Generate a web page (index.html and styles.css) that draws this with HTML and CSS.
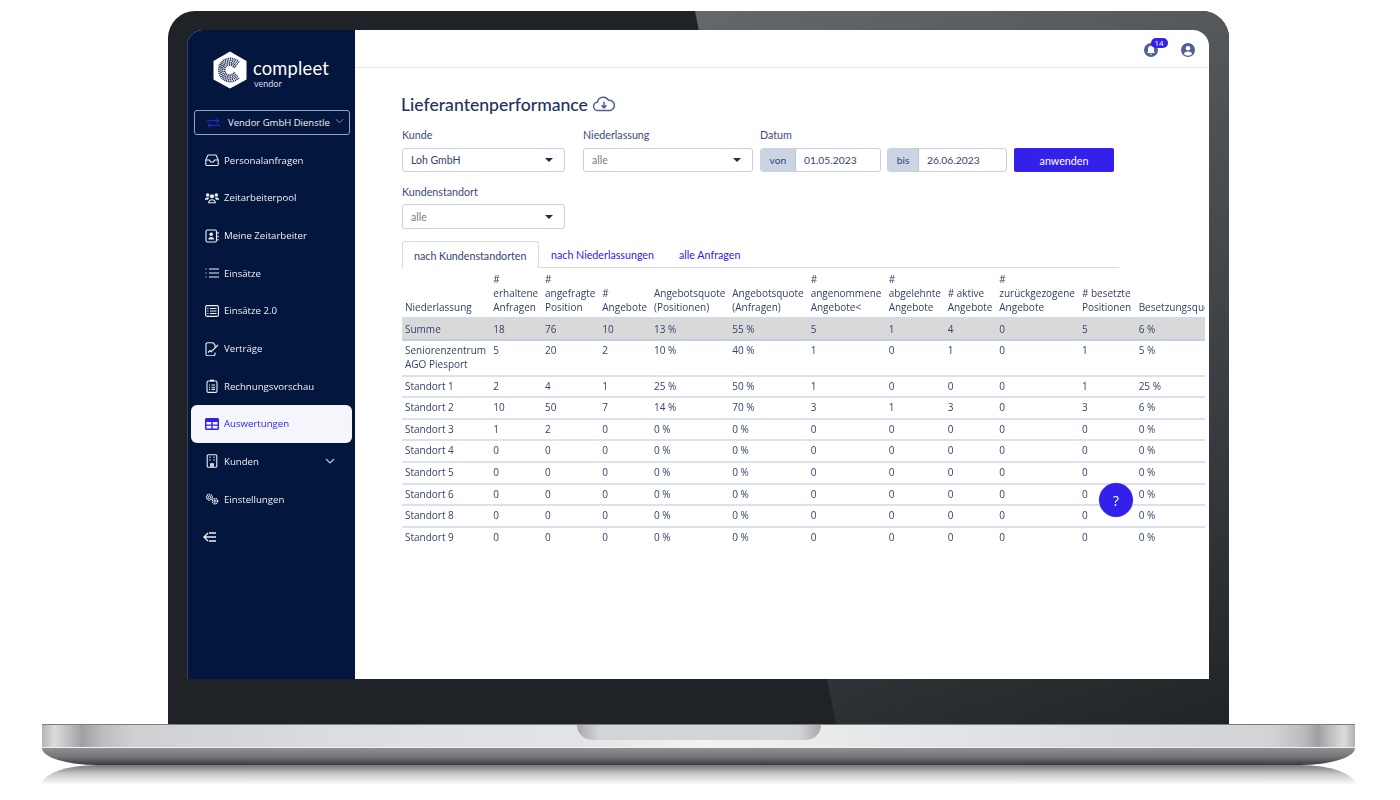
FILE: index.html
```html
<!DOCTYPE html>
<html lang="de">
<head>
<meta charset="utf-8">
<title>Lieferantenperformance</title>
<link rel="stylesheet" href="styles.css">
</head>
<body>
<div class="laptop">
  <div class="lid">
    <div class="glare"></div>
    <div class="screen">
      <aside class="sidebar">
        <div class="brand">
          <svg class="logo" viewBox="0 0 34 38">
            <path class="logo-hex" d="M17 0.500 33.500 10v18.500L17 37.500 0.500 28.500V10z"/>
            <g class="logo-c">
              <path d="M26 11.500A11.500 11.500 0 1 0 26 26.500"/>
              <path d="M24.500 13.500A9.300 9.300 0 1 0 24.500 24.500"/>
              <path d="M23 15.500A7.200 7.200 0 1 0 23 22.500"/>
              <path d="M21.500 17A5.200 5.200 0 1 0 21.500 21"/>
            </g>
          </svg>
          <div class="brand-text">
            <div class="brand-name">compleet</div>
            <div class="brand-sub">vendor</div>
          </div>
        </div>
        <div class="vendor">
          <svg class="vendor-arrows" viewBox="0 0 14 12"><path d="M0 3.500h13M10 1l3 2.500L10 6M14 8.500H1M4 6 1 8.500 4 11"/></svg>
          <span class="vendor-name">Vendor GmbH Dienstle</span>
          <svg class="vendor-chev" viewBox="0 0 10 6"><path d="M1 1l4 4 4-4"/></svg>
        </div>
        <nav class="nav">
          <a class="nav-item"><svg class="ico" viewBox="0 0 14 14"><path d="M3 2h8l2.300 5v4a1.500 1.500 0 0 1-1.500 1.500H2.200A1.500 1.500 0 0 1 .7 11V7zM.7 7h3.800l1 2h3l1-2h3.800"/></svg>Personalanfragen</a>
          <a class="nav-item"><svg class="ico ico-fill" viewBox="0 0 16 14"><circle cx="3" cy="3.500" r="2"/><circle cx="13" cy="3.500" r="2"/><circle cx="8" cy="5" r="2.400"/><path d="M0 8.500c0-1.500 1.200-2 3-2s2 .5 2 .5c-1 .5-1.500 1.200-1.500 2H0zM16 8.500c0-1.500-1.200-2-3-2s-2 .5-2 .5c1 .5 1.500 1.200 1.500 2H16zM3.500 13c0-3 2-4.500 4.500-4.500s4.500 1.500 4.500 4.500zM5 11.800h6c-.3-1.400-1.500-2.200-3-2.200s-2.700.8-3 2.200z"/></svg>Zeitarbeiterpool</a>
          <a class="nav-item"><svg class="ico" viewBox="0 0 14 14"><rect x="1" y="1" width="10.500" height="12" rx="1.500"/><circle class="solid" cx="6.200" cy="5.300" r="1.800"/><path class="solid" d="M3.300 10.500c0-1.800 1.300-2.600 2.900-2.600s2.900.8 2.900 2.600z"/><path d="M13 3v2M13 6.500v2M13 10v1.500"/></svg>Meine Zeitarbeiter</a>
          <a class="nav-item"><svg class="ico" viewBox="0 0 14 14"><path d="M4 3h10M4 7h10M4 11h10M.5 3h1M.5 7h1M.5 11h1"/></svg>Einsätze</a>
          <a class="nav-item"><svg class="ico" viewBox="0 0 14 14"><rect x=".6" y="1.600" width="12.800" height="10.800" rx="1.500"/><path d="M5 4.500h6.500M5 7h6.500M5 9.500h6.500M2.300 4.500h1.200M2.300 7h1.200M2.300 9.500h1.200"/></svg>Einsätze 2.0</a>
          <a class="nav-item"><svg class="ico" viewBox="0 0 14 14"><path d="M10 5V3L8 .8H2.500A1.500 1.500 0 0 0 1 2.300v9.900a1.500 1.500 0 0 0 1.500 1.500h6A1.500 1.500 0 0 0 10 12.200V10.500M3 10.500l2-2 1.200 1.200L13 3"/></svg>Verträge</a>
          <a class="nav-item"><svg class="ico" viewBox="0 0 14 14"><rect x="2" y="2" width="10" height="11.400" rx="1.300"/><path class="thick" d="M5 1.500h4"/><path d="M6.500 6h3.500M6.500 8.200h3.500M6.500 10.400h3.500M4 6h1M4 8.200h1M4 10.400h1"/></svg>Rechnungsvorschau</a>
          <a class="nav-item is-active"><svg class="ico ico-table" viewBox="0 0 14 12"><path d="M1.500 0h11A1.500 1.500 0 0 1 14 1.500v9a1.500 1.500 0 0 1-1.500 1.500h-11A1.500 1.500 0 0 1 0 10.500v-9A1.500 1.500 0 0 1 1.500 0zM1.500 4v2.500h4.800V4zM7.700 4v2.500h4.800V4zM1.500 7.800v2.700h4.800V7.800zM7.700 7.800v2.700h4.800V7.800z"/></svg>Auswertungen</a>
          <a class="nav-item"><svg class="ico" viewBox="0 0 14 14"><rect x="2.200" y=".8" width="9.600" height="12.400" rx="1"/><path class="thick" d="M4.500 3.300h1M8.500 3.300h1M4.500 6h1M8.500 6h1M6 13V10h2v3"/></svg>Kunden<svg class="nav-chev" viewBox="0 0 10 6"><path d="M1 1l4 4 4-4"/></svg></a>
          <a class="nav-item"><svg class="ico ico-gears" viewBox="0 0 16 14"><circle cx="5" cy="5" r="1.500"/><circle class="teeth" cx="5" cy="5" r="3.300"/><circle cx="11.500" cy="9.500" r="1.200"/><circle class="teeth" cx="11.500" cy="9.500" r="3"/></svg>Einstellungen</a>
          <a class="nav-item"><svg class="ico ico-back" viewBox="0 0 14 10"><path d="M5 1 1 5l4 4M1 5h12M6 1h7M6 9h7"/></svg></a>
        </nav>
      </aside>
      <main class="main">
        <header class="topbar">
          <div class="bell">
            <svg class="top-ico" viewBox="0 0 14 14"><circle class="top-bg" cx="7" cy="7" r="7"/><path class="top-fg" d="M7 3a3 3 0 0 0-3 3v2.500L3 10h8l-1-1.500V6a3 3 0 0 0-3-3zM6 10.800h2a1 1 0 0 1-2 0z"/></svg>
            <span class="badge">14</span>
          </div>
          <svg class="top-ico" viewBox="0 0 14 14"><circle class="top-bg" cx="7" cy="7" r="7"/><circle class="top-fg" cx="7" cy="5.300" r="2.300"/><path class="top-fg" d="M2.800 11c.6-1.600 2.300-2.400 4.200-2.400s3.600.8 4.200 2.400A5.500 5.500 0 0 1 7 12.800 5.500 5.500 0 0 1 2.800 11z"/></svg>
        </header>
        <section class="content">
          <h1 class="title">Lieferantenperformance
            <svg class="cloud" viewBox="0 0 24 17"><path d="M6 15.500H5.500a4.500 4.500 0 0 1-.6-9A6.500 6.500 0 0 1 17 4.500a5.500 5.500 0 0 1 1.500 11H6zM12 6v6.500M9.300 10l2.700 2.700 2.700-2.700"/></svg>
          </h1>
          <div class="filters">
            <div class="field f-kunde">
              <label class="label">Kunde</label>
              <div class="select"><span>Loh GmbH</span><i class="caret"></i></div>
            </div>
            <div class="field f-nl">
              <label class="label">Niederlassung</label>
              <div class="select is-muted"><span>alle</span><i class="caret"></i></div>
            </div>
            <div class="field f-date">
              <label class="label">Datum</label>
              <div class="date-row">
                <div class="date d-von"><span class="addon">von</span><span class="date-val">01.05.2023</span></div>
                <div class="date d-bis"><span class="addon">bis</span><span class="date-val">26.06.2023</span></div>
                <button class="apply">anwenden</button>
              </div>
            </div>
          </div>
          <div class="field f-kunde f-standort">
            <label class="label">Kundenstandort</label>
            <div class="select is-muted is-tall"><span>alle</span><i class="caret"></i></div>
          </div>
          <div class="tabs">
            <a class="tab is-current">nach Kundenstandorten</a>
            <a class="tab t2">nach Niederlassungen</a>
            <a class="tab t3">alle Anfragen</a>
          </div>
          <div class="table-clip">
            <table class="perf">
              <colgroup><col class="c1"><col class="c2"><col class="c3"><col class="c4"><col class="c5"><col class="c6"><col class="c7"><col class="c8"><col class="c9"><col class="c10"><col class="c11"><col class="c12"></colgroup>
              <thead>
                <tr><th>Niederlassung</th><th>#<br>erhaltene<br>Anfragen</th><th>#<br>angefragte<br>Position</th><th>#<br>Angebote</th><th>Angebotsquote<br>(Positionen)</th><th>Angebotsquote<br>(Anfragen)</th><th>#<br>angenommene<br>Angebote&lt;</th><th>#<br>abgelehnte<br>Angebote</th><th># aktive<br>Angebote</th><th>#<br>zurückgezogene<br>Angebote</th><th># besetzte<br>Positionen</th><th>Besetzungsquote</th></tr>
              </thead>
              <tbody>
                <tr class="sum"><td>Summe</td><td>18</td><td>76</td><td>10</td><td>13 %</td><td>55 %</td><td>5</td><td>1</td><td>4</td><td>0</td><td>5</td><td>6 %</td></tr>
                <tr class="two"><td>Seniorenzentrum<br>AGO Piesport</td><td>5</td><td>20</td><td>2</td><td>10 %</td><td>40 %</td><td>1</td><td>0</td><td>1</td><td>0</td><td>1</td><td>5 %</td></tr>
                <tr><td>Standort 1</td><td>2</td><td>4</td><td>1</td><td>25 %</td><td>50 %</td><td>1</td><td>0</td><td>0</td><td>0</td><td>1</td><td>25 %</td></tr>
                <tr><td>Standort 2</td><td>10</td><td>50</td><td>7</td><td>14 %</td><td>70 %</td><td>3</td><td>1</td><td>3</td><td>0</td><td>3</td><td>6 %</td></tr>
                <tr><td>Standort 3</td><td>1</td><td>2</td><td>0</td><td>0 %</td><td>0 %</td><td>0</td><td>0</td><td>0</td><td>0</td><td>0</td><td>0 %</td></tr>
                <tr><td>Standort 4</td><td>0</td><td>0</td><td>0</td><td>0 %</td><td>0 %</td><td>0</td><td>0</td><td>0</td><td>0</td><td>0</td><td>0 %</td></tr>
                <tr><td>Standort 5</td><td>0</td><td>0</td><td>0</td><td>0 %</td><td>0 %</td><td>0</td><td>0</td><td>0</td><td>0</td><td>0</td><td>0 %</td></tr>
                <tr><td>Standort 6</td><td>0</td><td>0</td><td>0</td><td>0 %</td><td>0 %</td><td>0</td><td>0</td><td>0</td><td>0</td><td>0</td><td>0 %</td></tr>
                <tr><td>Standort 8</td><td>0</td><td>0</td><td>0</td><td>0 %</td><td>0 %</td><td>0</td><td>0</td><td>0</td><td>0</td><td>0</td><td>0 %</td></tr>
                <tr class="last"><td>Standort 9</td><td>0</td><td>0</td><td>0</td><td>0 %</td><td>0 %</td><td>0</td><td>0</td><td>0</td><td>0</td><td>0</td><td>0 %</td></tr>
              </tbody>
            </table>
          </div>
        </section>
        <button class="help">?</button>
      </main>
    </div>
  </div>
  <div class="base"><div class="notch"></div></div>
  <div class="underside"></div>
  <div class="reflection"></div>
</div>
</body>
</html>
```

FILE: styles.css
```css
* { box-sizing: border-box; }
html, body { margin: 0; padding: 0; background: #fff; }
body { width: 1400px; height: 800px; overflow: hidden; font-family: "Open Sans", sans-serif; }

.laptop { display: flex; flex-direction: column; padding: 11px 45px 0 42px; }

.lid {
  position: relative;
  align-self: flex-start;
  margin-left: 126px;
  width: 1061px;
  height: 713px;
  padding: 19px 20px 45px 19px;
  background: #1f2226;
  border-radius: 27px 27px 0 0;
  overflow: hidden;
}
.glare {
  position: absolute;
  inset: 0;
  background: linear-gradient(160deg, #73777a 0%, #55595c 35%, #3a3e42 70%, #212427 100%);
  clip-path: polygon(527px 0, 100% 0, 100% 100%, 668px 100%);
}
.screen {
  position: relative;
  display: flex;
  height: 649px;
  background: #fff;
  border-radius: 16px 16px 0 0;
  overflow: hidden;
  filter: blur(.3px);
}

/* sidebar */
.sidebar {
  width: 168px;
  flex: none;
  background: #03163d;
  border-left: 1px solid #3b4150;
  display: flex;
  flex-direction: column;
}
.brand { display: flex; align-items: flex-start; gap: 6px; padding: 21px 0 0 25px; height: 80px; }
.logo { width: 34px; height: 38px; flex: none; }
.logo-hex { fill: #fff; }
.logo-c path { fill: none; stroke: #1d2c50; stroke-width: 1.800; stroke-dasharray: 1.100 .7; }
.brand-text { color: #fff; padding-top: 7px; }
.brand-name { font-family: Lato, sans-serif; font-size: 18.300px; line-height: 21px; letter-spacing: .2px; font-weight: 400; }
.brand-sub { font-family: Lato, sans-serif; font-size: 9px; line-height: 9px; color: #d5d9e2; margin-left: 1px; }

.vendor {
  margin-left: 6px;
  width: 156px;
  height: 25px;
  display: flex;
  align-items: center;
  border: 1px solid #9aa2b3;
  border-radius: 3px;
  color: #f0f2f6;
  font-size: 9.500px;
}
.vendor-arrows { width: 13px; height: 12px; margin-left: 12px; fill: none; stroke: #3a2bf0; stroke-width: 1; }
.vendor-name { margin-left: 8px; white-space: nowrap; }
.vendor-chev { width: 9px; height: 6px; margin-left: 5px; margin-top: -3px; fill: none; stroke: #9aa2b3; stroke-width: 1; }

.nav { display: flex; flex-direction: column; margin-top: 6.500px; padding: 0 3px; }
.nav-item {
  display: flex;
  align-items: center;
  height: 37.650px;
  padding-left: 14px;
  color: #eef0f5;
  font-size: 9.650px;
  border-radius: 6px;
  white-space: nowrap;
}
.ico { width: 14px; height: 14px; flex: none; margin-right: 5px; fill: none; stroke: #eef0f5; stroke-width: 1.100; }
.ico .solid { fill: #eef0f5; stroke: none; }
.ico .thick { stroke-width: 1.600; }
.ico-fill { fill: #eef0f5; stroke: none; }
.ico-table { fill: #3320ea; stroke: none; height: 12px; }
.ico-back { stroke-width: 1.400; margin-left: -2px; height: 10px; }
.ico-gears .teeth { stroke-width: 1.500; stroke-dasharray: 1.600 .8; }
.is-active { background: #f5f6fb; color: #3320ea; }
.nav-chev { width: 10px; height: 6px; margin-left: 66px; fill: none; stroke: #c5cad6; stroke-width: 1.100; }

/* main */
.main { position: relative; flex: 1; min-width: 0; }
.topbar {
  height: 38px;
  display: flex;
  justify-content: flex-end;
  align-items: center;
  gap: 23px;
  padding: 3px 14.500px 0 0;
  border-bottom: 1px solid #e3e6f0;
}
.bell { position: relative; width: 14px; height: 14px; }
.top-ico { width: 14px; height: 14px; display: block; }
.top-bg { fill: #4f6193; }
.top-fg { fill: #fff; }
.badge {
  position: absolute;
  top: -5px;
  left: 7px;
  width: 17px;
  height: 10px;
  border-radius: 5px;
  background: #3320ea;
  color: #fff;
  font: 8px/10px "Open Sans", sans-serif;
  text-align: center;
}

.content { padding: 26px 0 0 47px; color: #2a3a66; font-family: Lato, sans-serif; }
.title { margin: 0 0 0 -1px; font-size: 17.600px; line-height: 22px; font-weight: 500; color: #24325c; display: flex; align-items: center; gap: 5px; }
.cloud { width: 22px; height: 16px; fill: none; stroke: #4f6193; stroke-width: 1.600; margin-top: -2px; }
.filters { display: flex; margin-top: 12px; }
.field { display: flex; flex-direction: column; }
.f-kunde { width: 163px; margin-right: 18px; }
.f-nl { width: 170px; margin-right: 7px; }
.f-standort { margin-top: 13px; }
.f-standort .label { margin-bottom: 5px; }
.label { font-size: 10.700px; line-height: 14px; color: #3a4a75; margin-bottom: 6px; }
.select {
  height: 24px;
  border: 1px solid #c7d0e3;
  border-radius: 3px;
  display: flex;
  align-items: center;
  justify-content: space-between;
  padding: 0 11px 0 8px;
  font-size: 10.500px;
  color: #33436f;
}
.is-tall { height: 25px; }
.is-muted { color: #777d88; }
.caret { width: 0; height: 0; border: 4px solid transparent; border-top-color: #1f2c52; border-bottom: 0; }
.date-row { display: flex; }
.date { height: 24px; display: flex; border: 1px solid #c7d0e3; border-radius: 3px; font-size: 10.300px; overflow: hidden; }
.d-von { width: 121px; margin-right: 6px; }
.d-bis { width: 120px; margin-right: 7px; }
.addon { background: #ccd4e4; color: #33436f; display: flex; align-items: center; justify-content: center; border-right: 1px solid #b9c3d9; flex: none; }
.d-von .addon { width: 35px; }
.d-bis .addon { width: 31px; }
.date-val { display: flex; align-items: center; padding-left: 8px; color: #33436f; }
.apply {
  width: 100px;
  height: 24px;
  border: 0;
  border-radius: 2px;
  background: #3320ea;
  color: #fff;
  font: 10.700px Lato, sans-serif;
  padding: 0;
}

.tabs { display: flex; width: 717px; height: 27px; margin-top: 12px; border-bottom: 1px solid #d3daea; }
.tab { display: flex; align-items: center; justify-content: center; font-size: 10.700px; color: #3320ea; height: 26px; }
.is-current { width: 136.500px; height: 27px; color: #33436f; background: #fff; border: 1px solid #d3daea; border-bottom: 0; border-radius: 3px 3px 0 0; }
.t2 { margin-left: 12.500px; }
.t3 { margin-left: 25px; }

.table-clip { width: 803px; overflow: hidden; }
.perf { table-layout: fixed; width: 833.700px; border-collapse: collapse; font-size: 10px; color: #33436f; font-family: "Open Sans", sans-serif; }
.perf th { font-weight: 400; text-align: left; vertical-align: bottom; padding: 4px 0 3px 3px; line-height: 14px; white-space: nowrap; border-bottom: 2px solid #d3daea; height: 50px; color: #2f3f6b; }
.perf td { padding: 2px 0 3.600px 3px; line-height: 14px; vertical-align: top; white-space: nowrap; border-bottom: 2px solid #dde1ee; }
.perf .last td { border-bottom: 0; }
.perf .sum td { background: #d9d9d9; border-bottom-color: #c3cde0; padding-top: 3px; padding-bottom: 3px; }
.c1 { width: 88.300px; } .c2 { width: 51.700px; } .c3 { width: 57.300px; } .c4 { width: 51.700px; }
.c5 { width: 78.300px; } .c6 { width: 78.400px; } .c7 { width: 78px; } .c8 { width: 59px; }
.c9 { width: 51.600px; } .c10 { width: 82.700px; } .c11 { width: 56.700px; } .c12 { width: 100px; }

.help {
  position: absolute;
  left: 744px;
  top: 453px;
  width: 34px;
  height: 34px;
  border: 0;
  border-radius: 50%;
  background: #3320ea;
  color: #fff;
  font: 14px "Open Sans", sans-serif;
  padding: 0;
  box-shadow: 0 0 2px rgba(0,0,0,.15);
}

/* base */
.base {
  position: relative;
  display: flex;
  justify-content: center;
  width: 1313px;
  height: 24px;
  border-top: 1px solid #7b7e80;
  border-bottom: 1px solid #f1f1f2;
  background: linear-gradient(90deg, #b3b3b5 0, #dcdcdc 12px, #c0c0c2 26px, #a0a0a2 40px, #bcbcbe 60px, #cfd0d2 90px, #dcddde 300px, #e3e4e5 540px, #f2f2f2 660px, #e5e6e7 860px, #d9dadb 1080px, #d2d3d5 1230px, #bdbdbf 1260px, #a0a0a2 1276px, #c2c2c4 1290px, #dcdcdc 1302px, #b0b0b2 1313px);
}
.notch {
  width: 244px;
  height: 15px;
  border-radius: 0 0 16px 16px;
  background: linear-gradient(90deg, #a8a8aa 0, #d3d4d5 22px, #d3d4d5 222px, #a8a8aa 244px);
}
.underside {
  width: 1313px;
  height: 17px;
  border-radius: 0 0 55px 55px / 0 0 17px 17px;
  background: linear-gradient(180deg, #8f8f93 0, #77777b 50%, #3b3b3e 100%);
}
.reflection {
  width: 1313px;
  height: 20px;
  border-radius: 55px 55px 0 0 / 20px 20px 0 0;
  background: linear-gradient(180deg, #76767a 0, #c9c9cb 45%, #fff 100%);
}
```
